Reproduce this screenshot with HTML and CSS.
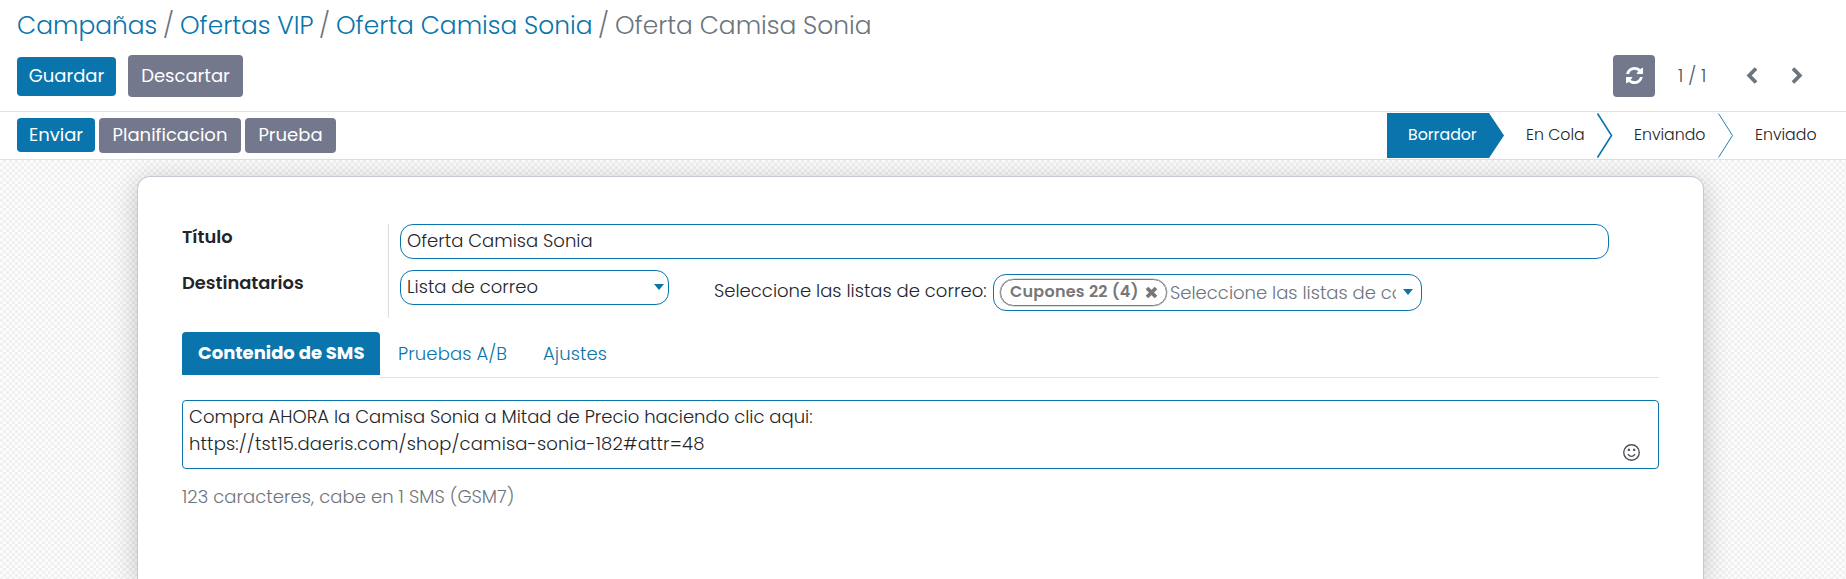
FILE: index.html
```html
<!DOCTYPE html>
<html lang="es">
<head>
<meta charset="utf-8">
<title>Oferta Camisa Sonia</title>
<link rel="stylesheet" href="styles.css">
</head>
<body>
<header class="control-panel">
  <nav class="breadcrumb">
    <a class="crumb c1">Campañas</a><span class="sep">/</span><a class="crumb c2">Ofertas VIP</a><span class="sep">/</span><a class="crumb c3">Oferta Camisa Sonia</a><span class="sep">/</span><span class="crumb c4">Oferta Camisa Sonia</span>
  </nav>
  <div class="actions">
    <button class="btn primary save">Guardar</button>
    <button class="btn secondary discard">Descartar</button>
    <div class="pager">
      <button class="btn secondary refresh" aria-label="Actualizar"><svg width="17" height="17" viewBox="0 0 1536 1536" fill="#fff"><path d="M1511 928q0 5-1 7-64 268-268 434.500T764 1536q-146 0-282.500-55T238 1324l-129 129q-19 19-45 19t-45-19-19-45V960q0-26 19-45t45-19h448q26 0 45 19t19 45-19 45l-137 137q71 66 161 102t187 36q134 0 250-65t186-179q11-17 53-117 8-23 30-23h192q13 0 22.500 9.500t9.500 22.500zm25-800v448q0 26-19 45t-45 19h-448q-26 0-45-19t-19-45 19-45l138-138Q969 256 768 256q-134 0-250 65T332 500q-11 17-53 117-8 23-30 23H50q-13 0-22.500-9.500T18 608v-7q65-268 270-434.500T768 0q146 0 284 55.500T1297 212l130-129q19-19 45-19t45 19 19 45z"/></svg></button>
      <span class="count">1 / 1</span>
      <svg class="prev" width="12" height="18" viewBox="0 0 12 18"><path d="M10 1.500 L3.200 8.500 L10 15.500"/></svg>
      <svg class="next" width="12" height="18" viewBox="0 0 12 18"><path d="M2 1.500 L8.800 8.500 L2 15.500"/></svg>
    </div>
  </div>
</header>
<div class="statusbar">
  <div class="status-buttons">
    <button class="btn primary send">Enviar</button>
    <button class="btn secondary plan">Planificacion</button>
    <button class="btn secondary test">Prueba</button>
  </div>
  <div class="steps">
    <span class="step active"><span class="s1">Borrador</span></span>
    <span class="step queue">En Cola</span>
    <svg class="arrow" width="16" height="45" viewBox="0 0 16 45"><path d="M0.500 0.500 L14.500 22.500 L0.500 44.500" stroke-width="1.600"/></svg>
    <span class="step sending">Enviando</span>
    <svg class="arrow" width="16" height="45" viewBox="0 0 16 45"><path d="M0.500 0.500 L14.500 22.500 L0.500 44.500" stroke-width="0.900"/></svg>
    <span class="step sent">Enviado</span>
  </div>
</div>
<main class="content">
  <section class="sheet">
    <div class="group">
      <div class="labels"><label class="l1">Título</label><label class="l2">Destinatarios</label></div>
      <div class="fields">
        <div class="input title"><span class="t1">Oferta Camisa Sonia</span></div>
        <div class="row">
          <div class="input model"><span class="t2">Lista de correo</span><i class="caret"></i></div>
          <span class="hint">Seleccione las listas de correo:</span>
          <div class="input tags">
            <span class="tag"><b>Cupones 22 (4)</b><svg width="13" height="13" viewBox="0 0 13 13"><path d="M2 2 L11 11 M11 2 L2 11"/></svg></span>
            <input class="placeholder" placeholder="Seleccione las listas de correo">
            <i class="caret"></i>
          </div>
        </div>
      </div>
    </div>
    <div class="tabs"><a class="tab active"><span>Contenido de SMS</span></a><a class="tab ab">Pruebas A/B</a><a class="tab settings">Ajustes</a></div>
    <div class="message">
      <p><span class="m1">Compra AHORA la Camisa Sonia a Mitad de Precio haciendo clic aqui:</span><br><span class="m2">https://tst15.daeris.com/shop/camisa-sonia-182#attr=48</span></p>
      <svg class="emoji" width="17" height="17" viewBox="0 0 16 16"><circle cx="8" cy="8" r="7.300"/><path d="M4.600 9.600 Q8 13.600 11.400 9.600"/><path class="eyes" d="M4.500 4.500h2v2h-2z M9.500 4.500h2v2h-2z"/></svg>
    </div>
    <div class="counter">123 caracteres, cabe en 1 SMS (GSM7)</div>
  </section>
</main>
</body>
</html>
```
FILE: styles.css
```css
* { box-sizing: border-box; }
body { margin: 0; height: 579px; overflow: hidden; display: flex; flex-direction: column; background: #fff; color: #212529; font: 300 18px/27px Poppins, Inter, "Open Sans", sans-serif; white-space: nowrap; }
a { color: #0975ac; }
.control-panel { height: 112px; border-bottom: 1px solid #dee2e6; flex: none; }
.breadcrumb { height: 55px; padding: 8px 0 0 17px; font-size: 24.900px; line-height: 36px; display: flex; color: #6c757d; }
.crumb { display: block; }
.c1 { width: 146px; } .c2 { width: 139px; } .c3 { width: 262px; }
.sep { width: 17px; }
.actions { display: flex; align-items: center; height: 42px; padding-left: 17px; }
.btn { border: 0; border-radius: 4px; padding: 0 0 2px; color: #fff; font: 400 18px/27px Poppins, Inter, sans-serif; display: flex; align-items: center; justify-content: center; }
.primary { background: #0975ac; }
.secondary { background: #74788d; }
.save { width: 99px; height: 39px; margin-right: 12px; }
.discard { width: 115px; height: 42px; }
.pager { display: flex; align-items: center; margin-left: auto; margin-right: 43px; }
.refresh { width: 42px; height: 42px; }
.count { width: 68px; margin-left: 23px; color: #495057; line-height: 25px; padding-bottom: 2px; }
.pager path { fill: none; stroke: #6c757d; stroke-width: 3.800; }
.pager .refresh path { fill: #fff; stroke: none; }
.next { margin-left: 33px; }
.statusbar { height: 48px; border-bottom: 1px solid #dee2e6; display: flex; justify-content: space-between; flex: none; padding: 1px 0 0 17px; }
.status-buttons { display: flex; gap: 4px; padding-top: 5px; }
.send { width: 78px; height: 34px; } .plan { width: 142px; height: 35px; } .test { width: 91px; height: 35px; }
.steps { display: flex; height: 45px; width: 459px; font-size: 15.750px; line-height: 44px; }
.step.active { width: 117px; padding-left: 21px; margin-right: 22px; color: #fff; background: #0975ac; font-weight: 400; clip-path: polygon(0 0, 102px 0, 117px 50%, 102px 100%, 0 100%); }
.queue { width: 71px; } .sending { width: 84px; margin-left: 21px; } .sent { margin-left: 21px; }
.arrow { flex: none; fill: none; stroke: #0975ac; }
.content { flex: 1; padding: 16px 142px 0 137px; background: repeating-conic-gradient(#f0f0f0 0 25%, #fdfdfd 0 50%) 0 0 / 6px 6px; }
.sheet { width: 1567px; height: 403px; border: 1px solid #c8c8d3; border-bottom: 0; border-radius: 13px 13px 0 0; background: #fff; padding: 47px 44px 0; box-shadow: 0 5px 28px rgba(0,0,0,.22); }
.group { display: flex; height: 94px; }
.labels { width: 207px; border-right: 1px solid #dcdcdc; font-weight: 600; font-size: 17.850px; line-height: 26px; display: flex; flex-direction: column; gap: 20px; }
.fields { padding-left: 11px; }
.input { border: 1px solid #0975ac; border-radius: 13px; height: 35px; padding: 0 6px; line-height: 32px; }
.title { width: 1209px; margin-bottom: 11px; }
.row { display: flex; }
.model { width: 269px; display: flex; justify-content: space-between; padding-right: 4px; }
.caret { border: 5.500px solid transparent; border-top: 6px solid #0975ac; border-bottom: 0; margin-top: 13px; flex: none; height: 6px; }
.hint { width: 279px; margin-left: 45px; line-height: 42px; }
.tags { width: 429px; height: 37px; margin-top: 4px; display: flex; align-items: center; padding: 0 6px; }
.tag { width: 167px; height: 27px; border: 1px solid #74777d; border-radius: 14px; display: flex; align-items: center; padding-left: 9px; color: #777; font-size: 16px; line-height: 23px; letter-spacing: .25px; margin-right: 3px; box-shadow: 0 0 0 .3px #777; }
.tag b { font-weight: 600; width: 135px; padding-bottom: 2px; }
.tag path { stroke: #777; stroke-width: 3.800; }
.placeholder { width: 226px; border: 0; padding: 0; background: none; font: inherit; }
.placeholder::placeholder { color: #6c757d; opacity: 1; }
.tags .caret { margin: 0 0 2px 7px; }
.tabs { height: 46px; margin-top: 14px; display: flex; }
.tab { border-bottom: 1px solid #dee2e6; line-height: 43px; letter-spacing: .1px; }
.tab.active { width: 198px; height: 43px; line-height: 42px; letter-spacing: 0; border: 0; background: #0975ac; color: #fff; border-radius: 4px 4px 0 0; font-weight: 700; padding-left: 16px; }
.ab { width: 163px; padding-left: 18px; } .settings { flex: 1; }
.message { margin-top: 22px; height: 69px; border: 1px solid #0975ac; border-radius: 4px; position: relative; padding: 2px 6px; }
.message p { margin: 0; }
.m2 { letter-spacing: .15px; }
.emoji { position: absolute; right: 18px; bottom: 7px; fill: none; stroke: #495057; stroke-width: 1.300; }
.emoji .eyes { fill: #495057; stroke: none; }
.counter { margin-top: 14px; color: #6c757d; letter-spacing: .05px; }
```
